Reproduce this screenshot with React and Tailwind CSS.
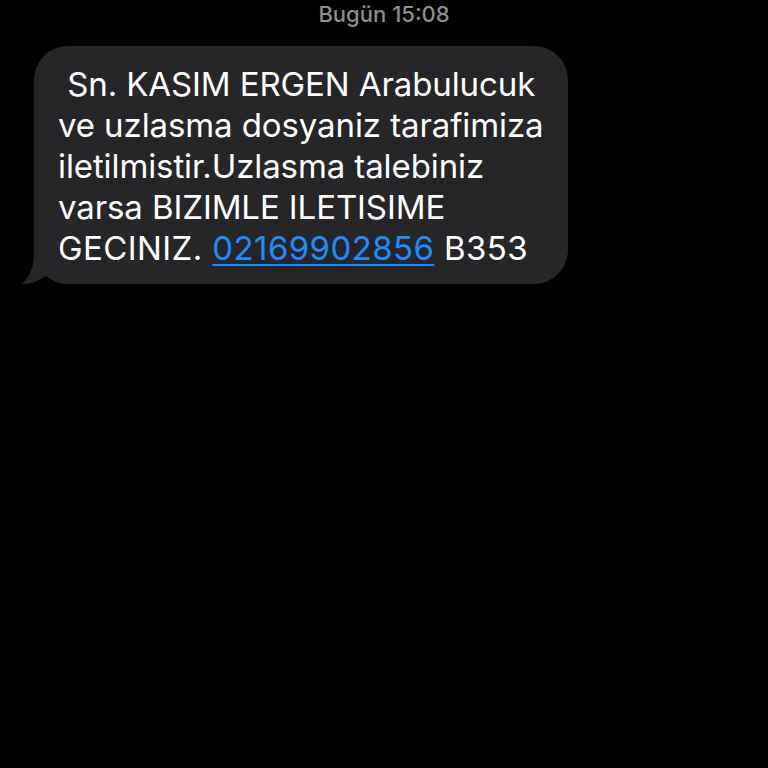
import React from "react";

const font = { fontFamily: "Inter, 'Liberation Sans', sans-serif" };

export default function App() {
  return (
    <div className="w-[768px] h-[768px] bg-black overflow-hidden" style={font}>
      <div className="flex justify-center pt-0 text-[22px] leading-[28px] text-[#8e8e93] font-medium">
        <span>Bugün</span>
        <span className="ml-[6px]">15:08</span>
      </div>

      <div className="pl-[34px] pt-[18px]">
        <div className="relative w-[534px] rounded-[34px] bg-[#262628] pl-[24px] pr-[10px] pt-[18px] pb-[15px] text-[33px] leading-[41px] text-white tracking-[-0.1px]">
          <p>
            &nbsp;Sn. KASIM ERGEN Arabulucuk
            <br />
            ve uzlasma dosyaniz tarafimiza
            <br />
            iletilmistir.Uzlasma talebiniz
            <br />
            varsa BIZIMLE ILETISIME
            <br />
            <span className="tracking-[0.4px]">
              GECINIZ.{" "}
              <span className="text-[#1e8cff] underline underline-offset-[4px] decoration-[2px]">
                02169902856
              </span>{" "}
              B353
            </span>
          </p>
          <svg
            className="absolute left-[-12px] bottom-0"
            width="36"
            height="30"
            viewBox="0 0 36 30"
          >
            <path
              d="M12 0 C12 12 8 22 0 30 C10 30 20 26 26 20 L36 20 L36 0 Z"
              fill="#262628"
            />
          </svg>
        </div>
      </div>
    </div>
  );
}
